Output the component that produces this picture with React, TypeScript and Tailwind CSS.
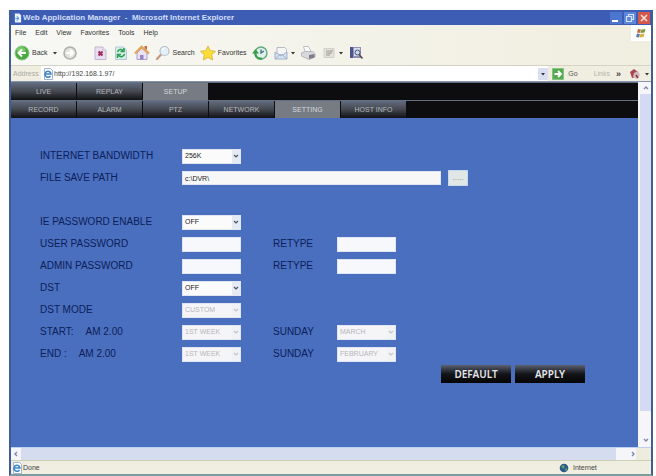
import React, { useState } from 'react';

const MENUS = ['File', 'Edit', 'View', 'Favorites', 'Tools', 'Help'];
const MAIN_TABS = ['LIVE', 'REPLAY', 'SETUP'];
const SUB_TABS = ['RECORD', 'ALARM', 'PTZ', 'NETWORK', 'SETTING', 'HOST INFO'];

const Caret = () => (
  <svg viewBox="0 0 4 4" className="w-1 h-1 shrink-0" aria-hidden="true">
    <path d="M0 1h4L2 3.5z" fill="#333" />
  </svg>
);

const Chevron = ({ up, left, right }: { up?: boolean; left?: boolean; right?: boolean }) => (
  <svg viewBox="0 0 6 6" className="w-1.5 h-1.5" aria-hidden="true">
    <path
      d={up ? 'M1 4l2-2 2 2' : left ? 'M4 1L2 3l2 2' : right ? 'M2 1l2 2-2 2' : 'M1 2l2 2 2-2'}
      fill="none"
      stroke="#7b8bb0"
      strokeWidth="1.4"
    />
  </svg>
);

const Icon = ({ children }: { children: React.ReactNode }) => (
  <svg viewBox="0 0 16 16" className="w-4 h-4 shrink-0" aria-hidden="true">{children}</svg>
);

const BackIcon = () => (
  <Icon>
    <circle cx="8" cy="8" r="7" fill="#49a840" stroke="#8bc785" />
    <ellipse cx="7" cy="5" rx="4.5" ry="3" fill="#8bd77c" opacity=".7" />
    <path d="M12 8H5M8 4.5L4.5 8 8 11.5" fill="none" stroke="#fff" strokeWidth="2" />
  </Icon>
);

const ForwardIcon = () => (
  <Icon>
    <circle cx="8" cy="8" r="6" fill="#e2e2de" stroke="#b0b0ac" strokeWidth="1.6" />
    <path d="M4.5 8h6M8 5l3 3-3 3" fill="none" stroke="#fff" strokeWidth="2" />
  </Icon>
);

const StopIcon = () => (
  <Icon>
    <path d="M3 2h8l3 3v9.5H3z" fill="#eadff0" stroke="#c4b5d2" />
    <path d="M11 2v3h3" fill="#fff" stroke="#c4b5d2" />
    <path d="M6.5 6.500l4 4M10.500 6.500l-4 4" stroke="#9c2f5c" strokeWidth="2.200" />
  </Icon>
);

const RefreshIcon = () => (
  <Icon>
    <path d="M2.500 2h8l3 3v9.500h-11z" fill="#d9eee2" stroke="#b5c8d8" />
    <path d="M4.500 7c1-3 4-3 5.500-1.500M11 3v3.500H7.500M11.500 9c-1 3-4 3.500-6 1.500M4.500 13V9.500H8" fill="none" stroke="#26a158" strokeWidth="1.600" />
  </Icon>
);

const HomeIcon = () => (
  <Icon>
    <path d="M3 8v6.500h10V8L8 3z" fill="#e7e2f5" stroke="#a9a2d0" />
    <path d="M1 8.500L7.500 2 15 8.500" fill="none" stroke="#e2a55c" strokeWidth="2.400" />
    <path d="M10.500 1h2.500v4l-2.500-2z" fill="#c0694c" />
    <path d="M6 10h3.500v4.500H6z" fill="#9583c4" />
  </Icon>
);

const SearchIcon = () => (
  <Icon>
    <path d="M6.500 9L2 14" stroke="#c8967f" strokeWidth="2.200" strokeLinecap="round" />
    <circle cx="9.500" cy="6" r="4.500" fill="#e5f0f6" stroke="#b3bfce" strokeWidth="1.200" />
    <path d="M7 5c.5-1.500 2-2 3-2" fill="none" stroke="#fff" strokeWidth="1.200" />
  </Icon>
);

const StarIcon = () => (
  <Icon>
    <path d="M8 1l2.200 4.700 5.300.600-3.900 3.500 1.100 5.200L8 12.400 3.300 15l1.100-5.200L.500 6.300l5.300-.600z" fill="#f9df35" stroke="#dcb23a" strokeWidth=".900" />
  </Icon>
);

const HistoryIcon = () => (
  <Icon>
    <circle cx="9" cy="8" r="6" fill="#dff0ea" stroke="#63aa7c" strokeWidth="1.400" />
    <path d="M9 4.500V8l3-2" fill="none" stroke="#3f6d82" strokeWidth="1.300" />
    <path d="M10 13.500C5 14.500 3 11 3.500 7" fill="none" stroke="#3a9d4b" strokeWidth="2.200" />
    <path d="M0 8.500L3.500 4 7 8.500z" fill="#3a9d4b" />
  </Icon>
);

const MailIcon = () => (
  <Icon>
    <path d="M4 2.500h8l1.500 2v5H4z" fill="#f4f5f4" stroke="#b3bbc4" />
    <path d="M2 7l6 4 6-4v7H2z" fill="#d7e1f1" stroke="#9fb0ca" />
    <path d="M2 14l4.500-4M14 14l-4.500-4" stroke="#9fb0ca" />
  </Icon>
);

const PrintIcon = () => (
  <Icon>
    <path d="M3.500 1.500h5l3 6h-6z" fill="#fff" stroke="#b9bcc1" />
    <path d="M1.500 8l3-1.500h8l2.500 2V12l-6 2.500L1.500 11z" fill="#d8d9df" stroke="#b5b6bd" />
    <path d="M9 10l5.500-1v3.500L9 14z" fill="#807d86" />
  </Icon>
);

const EditIcon = () => (
  <Icon>
    <path d="M3 3.500h10v9H3z" fill="#e2e1da" stroke="#d0d0c8" />
    <path d="M5 6h6M5 8h6M5 10h4" stroke="#9e9f99" />
    <path d="M7 10l5-5" stroke="#b3b3ad" strokeWidth="1.500" />
  </Icon>
);

const ResearchIcon = () => (
  <Icon>
    <path d="M2 2h11v11H2z" fill="#8f93b8" />
    <path d="M2 2h3v11H2z" fill="#4f5687" />
    <path d="M6 3h6v8H6z" fill="#d9deee" />
    <circle cx="9.500" cy="7.500" r="2.500" fill="#c6dcf0" stroke="#4c5378" />
    <path d="M11 9.500l3.500 4" stroke="#5a4c4c" strokeWidth="1.600" />
  </Icon>
);

const PageIcon = () => (
  <svg viewBox="0 0 12 12" className="w-3 h-3 shrink-0" aria-hidden="true">
    <path d="M2.500.500h6l2 2v9h-8z" fill="#fff" stroke="#9db4d3" />
    <path d="M8.500 8A3 3 0 1 1 9 6H3.500" fill="none" stroke="#3c85c6" strokeWidth="1.500" />
  </svg>
);

const ToolButton = ({ icon, label, caret }: { icon: React.ReactNode; label?: string; caret?: boolean }) => (
  <button className="flex items-center gap-0.5 text-[7px] leading-4 text-[#333]">
    {icon}
    {label}
    {caret && <Caret />}
  </button>
);

const TabRow = ({ tabs, active, onSelect }: { tabs: string[]; active: string; onSelect: (t: string) => void }) => (
  <nav className="flex h-[18px] gap-px border-t border-[#657083] bg-[#0d0c0f]">
    {tabs.map(t => (
      <button
        key={t}
        onClick={() => onSelect(t)}
        className={`w-[65px] shrink-0 text-center text-[7px] leading-4 ${
          t === active
            ? 'bg-[#777b83] text-[#d5d8dd]'
            : 'bg-linear-to-b from-[#626c80] via-[#44474e] to-[#111317] text-[#b4b7bc]'
        }`}
      >
        {t}
      </button>
    ))}
  </nav>
);

const Select = ({ id, options, disabled }: { id: string; options: string[]; disabled?: boolean }) => (
  <span className="relative block h-[15px] w-[59px]">
    <select
      id={id}
      disabled={disabled}
      className="block h-full w-full appearance-none border border-[#dfe5f2] bg-[#fbfbfc] pl-0.5 text-[7px] leading-3 text-[#222] opacity-100 disabled:bg-[#f5f5f8] disabled:text-[#b5b5b9]"
    >
      {options.map(o => <option key={o}>{o}</option>)}
    </select>
    <span className={`pointer-events-none absolute top-px right-px flex h-[13px] w-2 items-center justify-center ${disabled ? 'bg-[#f1f2f5]' : 'bg-[#e6ebf3]'}`}>
      <svg viewBox="0 0 6 6" className="w-1.5 h-1.5" aria-hidden="true">
        <path d="M1 2l2 2 2-2" fill="none" stroke={disabled ? '#c5c5c8' : '#4c5565'} strokeWidth="1.200" />
      </svg>
    </span>
  </span>
);

const PasswordBox = ({ id }: { id: string }) => (
  <input id={id} type="password" className="block h-[15px] w-[59px] border border-[#dfe5f2] bg-[#f7f8fb] px-1 text-[7px]" />
);

const Row = ({ id, label, time, children }: { id?: string; label?: string; time?: string; children?: React.ReactNode }) => (
  <div className="flex h-[22px] items-center">
    <label htmlFor={id} className="flex w-[142px] shrink-0 gap-3 whitespace-nowrap">
      {label}
      {time && <span>{time}</span>}
    </label>
    {children}
  </div>
);

const Second = ({ id, label, children }: { id: string; label: string; children: React.ReactNode }) => (
  <>
    <label htmlFor={id} className="ml-8 w-16 shrink-0">{label}</label>
    {children}
  </>
);

const App: React.FC = () => {
  const [mainTab, setMainTab] = useState('SETUP');
  const [subTab, setSubTab] = useState('SETTING');
  const [path, setPath] = useState('c:\\DVR\\');
  const [url, setUrl] = useState('http://192.168.1.97/');

  return (
    <div className="min-h-screen bg-white pt-2.5 pr-[3px] pl-[9px] flex flex-col font-['Liberation_Sans',sans-serif]">
      <div className="flex flex-1 flex-col border-x-2 border-b-2 border-x-[#435d91] border-b-[#7b9d9e] bg-[#f0eee0]">
        <header className="flex h-[15px] items-center bg-[#3d5db5] pl-[3px] pr-px text-white">
          <svg viewBox="0 0 9 12" className="mr-px w-2 h-3" aria-hidden="true">
            <path d="M1 1h5l2 2v8H1z" fill="#e9f1fb" />
            <path d="M1.500 6.500h4M3 4.500a2 2 0 1 1 0 4" fill="none" stroke="#4b86cd" />
          </svg>
          <h1 className="flex-1 whitespace-pre text-[8px] font-bold leading-3 text-[#d3def7]">
            {'Web Application Manager  -  Microsoft Internet Explorer'}
          </h1>
          <div className="flex gap-0.5">
            <button aria-label="Minimize" className="flex h-3 w-3 items-end bg-[#4c76cf] p-0.5">
              <span className="h-0.5 w-1.5 bg-white" />
            </button>
            <button aria-label="Restore" className="h-3 w-3 bg-[#5c86d8]">
              <svg viewBox="0 0 12 12" aria-hidden="true">
                <path d="M4.500 4V2.500h5v5H8M2.500 4.500h5v5h-5z" fill="none" stroke="#d5e3fa" strokeWidth="1.200" />
              </svg>
            </button>
            <button aria-label="Close" className="h-3 w-3 bg-[#d5584a]">
              <svg viewBox="0 0 12 12" aria-hidden="true">
                <path d="M3 3l6 6M9 3l-6 6" stroke="#ffe4dc" strokeWidth="1.600" />
              </svg>
            </button>
          </div>
        </header>

        <div className="flex h-4 items-center bg-linear-to-r from-[#f8f8f5] to-[#f0eedf] pl-1 text-[7px] leading-4 text-[#333]">
          <nav className="flex flex-1 gap-[9px]">
            {MENUS.map(m => <button key={m}>{m}</button>)}
          </nav>
          <span className="flex h-full w-5 items-center justify-center bg-white">
            <svg viewBox="0 0 10 10" className="w-2.5 h-2.5" aria-hidden="true">
              <path d="M2 1l3 .500-1 3.500-3-.500z" fill="#c96a3c" />
              <path d="M5.500 1.500L9.500 1l-1 3.500L4.500 5z" fill="#7b9a3f" />
              <path d="M1 5.500L4 6 3 9.500 0 9z" fill="#5c7cab" />
              <path d="M4.500 6L8.500 5.500l-1 3.500-4 .500z" fill="#d8b23c" />
            </svg>
          </span>
        </div>

        <div className="flex h-[25px] items-center gap-[5px] border-b border-[#d5d3c4] bg-linear-to-r from-[#f8f8f5] to-[#f0eedf] pl-[3px]">
          <ToolButton icon={<BackIcon />} label="Back" />
          <Caret />
          <ToolButton icon={<ForwardIcon />} />
          <span className="w-1" />
          <ToolButton icon={<StopIcon />} />
          <ToolButton icon={<RefreshIcon />} />
          <ToolButton icon={<HomeIcon />} />
          <ToolButton icon={<SearchIcon />} label="Search" />
          <ToolButton icon={<StarIcon />} label="Favorites" />
          <ToolButton icon={<HistoryIcon />} />
          <ToolButton icon={<MailIcon />} caret />
          <ToolButton icon={<PrintIcon />} />
          <ToolButton icon={<EditIcon />} caret />
          <ToolButton icon={<ResearchIcon />} />
        </div>

        <div className="flex h-[15px] items-center text-[7px] leading-3 text-[#555]">
          <label htmlFor="address" className="w-[30px] pl-0.5 text-[#a9a9a2]">Address</label>
          <div className="flex h-full min-w-0 flex-1 items-center bg-white pl-px">
            <PageIcon />
            <input
              id="address"
              value={url}
              onChange={e => setUrl(e.target.value)}
              className="min-w-0 flex-1 text-[#444]"
            />
            <button aria-label="Show addresses" className="flex h-3 w-2.5 items-center justify-center bg-[#d9def0]">
              <Caret />
            </button>
          </div>
          <button className="ml-1 flex items-center gap-1">
            <svg viewBox="0 0 12 12" className="w-3 h-3" aria-hidden="true">
              <path d="M.500.500h11v11H.500z" fill="#53ad50" stroke="#88c082" />
              <path d="M2.500 6h6M6 3l3 3-3 3" fill="none" stroke="#fff" strokeWidth="1.800" />
            </svg>
            Go
          </button>
          <span className="ml-4 text-[#b5b4aa]">Links</span>
          <span className="ml-1.5 text-[9px] font-bold text-[#444]">»</span>
          <button aria-label="Add-ons" className="ml-2 mr-0.5 flex items-center gap-1">
            <svg viewBox="0 0 12 12" className="w-3 h-3" aria-hidden="true">
              <path d="M1 4l4-3 4 3-1 5-5 1z" fill="#a64752" />
              <path d="M5 5l4-2 2 4-3 4-4-2z" fill="#d9b8bd" />
              <path d="M7 7l2 3" stroke="#7e3641" strokeWidth="1.500" />
            </svg>
            <Caret />
          </button>
        </div>

        <div className="flex flex-1 border-t border-[#8795ad]">
          <main className="flex min-w-0 flex-1 flex-col bg-[#4a6fbf]">
            <TabRow tabs={MAIN_TABS} active={mainTab} onSelect={setMainTab} />
            <TabRow tabs={SUB_TABS} active={subTab} onSelect={setSubTab} />

            <form onSubmit={e => e.preventDefault()} className="pt-[27px] pl-[29px] text-[10px] leading-3 text-[#0c2058]">
              <Row id="bandwidth" label="INTERNET BANDWIDTH">
                <Select id="bandwidth" options={['256K', '512K']} />
              </Row>
              <Row id="path" label="FILE SAVE PATH">
                <input
                  id="path"
                  value={path}
                  onChange={e => setPath(e.target.value)}
                  className="h-3.5 w-[259px] border border-[#dfe5f2] bg-[#f7f7f8] px-0.5 text-[7px] text-[#222]"
                />
                <button aria-label="Browse" className="ml-[7px] h-4 w-5 border border-[#c5d8ec] bg-[#e0e7e5] text-[8px] leading-3 text-[#8a8c79]">
                  .....
                </button>
              </Row>
              <Row />
              <Row id="ie" label="IE PASSWORD ENABLE">
                <Select id="ie" options={['OFF', 'ON']} />
              </Row>
              <Row id="user" label="USER PASSWORD">
                <PasswordBox id="user" />
                <Second id="user2" label="RETYPE"><PasswordBox id="user2" /></Second>
              </Row>
              <Row id="admin" label="ADMIN PASSWORD">
                <PasswordBox id="admin" />
                <Second id="admin2" label="RETYPE"><PasswordBox id="admin2" /></Second>
              </Row>
              <Row id="dst" label="DST">
                <Select id="dst" options={['OFF', 'ON']} />
              </Row>
              <Row id="mode" label="DST MODE">
                <Select id="mode" options={['CUSTOM']} disabled />
              </Row>
              <Row id="start" label="START:" time="AM 2.00">
                <Select id="start" options={['1ST WEEK']} disabled />
                <Second id="startMonth" label="SUNDAY"><Select id="startMonth" options={['MARCH']} disabled /></Second>
              </Row>
              <Row id="end" label="END :" time="AM 2.00">
                <Select id="end" options={['1ST WEEK']} disabled />
                <Second id="endMonth" label="SUNDAY"><Select id="endMonth" options={['FEBRUARY']} disabled /></Second>
              </Row>
              <div className="flex justify-end gap-1 pr-[53px] font-['Noto_Sans',sans-serif] text-[10px] font-semibold leading-4 text-[#e4e6ea]">
                <button className="h-[18px] w-[70px] bg-linear-to-b from-[#5c6273] via-[#141519] to-[#050506]">DEFAULT</button>
                <button className="h-[18px] w-[70px] bg-linear-to-b from-[#5c6273] via-[#141519] to-[#050506]">APPLY</button>
              </div>
            </form>
          </main>

          {/* vertical scrollbar */}
          <div className="flex w-[13px] flex-col items-center bg-[#f6f6fa] pl-0.5">
            <span className="flex h-3 items-center"><Chevron up /></span>
            <span className="w-full flex-1 bg-[#d3daf2]" />
            <span className="flex h-9 items-end pb-1"><Chevron /></span>
          </div>
        </div>

        {/* horizontal scrollbar */}
        <div className="flex h-[13px] items-center border-t border-[#bcd0f0] bg-[#f6f6fa]">
          <span className="flex w-2.5 justify-center"><Chevron left /></span>
          <span className="h-full flex-1 bg-[#d5dcef]" />
          <span className="flex w-5 justify-end"><Chevron right /></span>
          <span className="h-full w-[15px] bg-[#eeecdf]" />
        </div>

        <footer className="flex h-3.5 items-center border-t border-[#cbd0b4] bg-[#f0eee0] text-[7px] leading-3 text-[#444]">
          <PageIcon />
          <span className="flex-1">Done</span>
          <span className="flex w-[92px] items-center gap-1">
            <svg viewBox="0 0 10 10" className="w-2.5 h-2.5" aria-hidden="true">
              <circle cx="5" cy="5" r="4.300" fill="#28568d" />
              <path d="M2 3l3-1 1 2-2 2zM6 6l2-1 .500 2L6.500 8.500z" fill="#57a06c" />
            </svg>
            Internet
          </span>
        </footer>
      </div>
    </div>
  );
};

export default App;
